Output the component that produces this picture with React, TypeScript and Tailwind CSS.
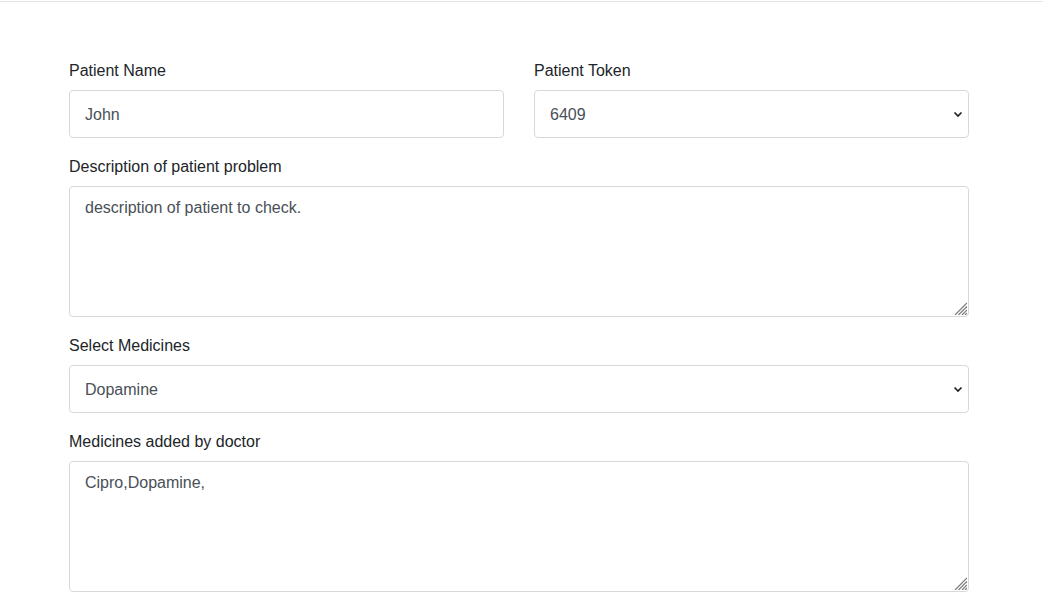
import React from 'react';

const medicines = ['Cipro', 'Dopamine', 'Paracetamol', 'Ibuprofen'];
const tokens = ['6409', '6410', '6411'];

function Chevron() {
  return (
    <svg
      className="pointer-events-none absolute right-[6px] top-1/2 -translate-y-1/2"
      width="10"
      height="10"
      viewBox="0 0 10 10"
      fill="none"
    >
      <path d="M1.5 3.5 L5 7 L8.5 3.5" stroke="#222" strokeWidth="1.7" />
    </svg>
  );
}

// resize grip drawn by hand so it looks like the desktop one
function Grip() {
  return (
    <svg
      className="pointer-events-none absolute bottom-[2px] right-[2px]"
      width="15"
      height="15"
      viewBox="0 0 15 15"
      fill="none"
      stroke="#7a7a7a"
      strokeWidth="1.2"
    >
      <path d="M3 15 L15 3" />
      <path d="M6.5 15 L15 6.5" />
      <path d="M10 15 L15 10" />
      <path d="M13 15 L15 13" />
    </svg>
  );
}

function SelectBox({ value, options }: { value: string; options: string[] }) {
  return (
    <div className="relative">
      <select
        defaultValue={value}
        className="h-[48px] w-full appearance-none rounded-[4px] border border-[#d6d9dc] bg-white px-[15px] pt-[1px] text-[16px] text-[#495057] outline-none"
      >
        {options.map((o) => (
          <option key={o}>{o}</option>
        ))}
      </select>
      <Chevron />
    </div>
  );
}

function NoteBox({ value }: { value: string }) {
  return (
    <div className="relative">
      <textarea
        defaultValue={value}
        className="block h-[131px] w-full resize-none rounded-[4px] border border-[#d6d9dc] px-[15px] pt-[9px] pb-[10px] text-[16px] leading-[24px] text-[#495057] outline-none"
      />
      <Grip />
    </div>
  );
}

function Label({ children }: { children: React.ReactNode }) {
  return <label className="mb-[7px] block text-[16px] leading-[24px] text-[#212529]">{children}</label>;
}

export default function App() {
  return (
    <div className="min-h-screen bg-white font-['Liberation_Sans',Arial,sans-serif]">
      <div className="h-[2px] border-b border-[#e3e3e3]" />
      <form className="w-[900px] ml-[69px] pt-[57px]">
        <div className="grid grid-cols-2 gap-x-[30px]">
          <div>
            <Label>Patient Name</Label>
            <input
              defaultValue="John"
              className="h-[48px] w-full rounded-[4px] border border-[#d6d9dc] px-[15px] pt-[1px] text-[16px] text-[#495057] outline-none"
            />
          </div>
          <div>
            <Label>Patient Token</Label>
            <SelectBox value="6409" options={tokens} />
          </div>
        </div>

        <div className="mt-[17px]">
          <Label>Description of patient problem</Label>
          <NoteBox value="description of patient to check." />
        </div>

        <div className="mt-[17px]">
          <Label>Select Medicines</Label>
          <SelectBox value="Dopamine" options={medicines} />
        </div>

        <div className="mt-[17px]">
          <Label>Medicines added by doctor</Label>
          <NoteBox value="Cipro,Dopamine," />
        </div>
      </form>
    </div>
  );
}
